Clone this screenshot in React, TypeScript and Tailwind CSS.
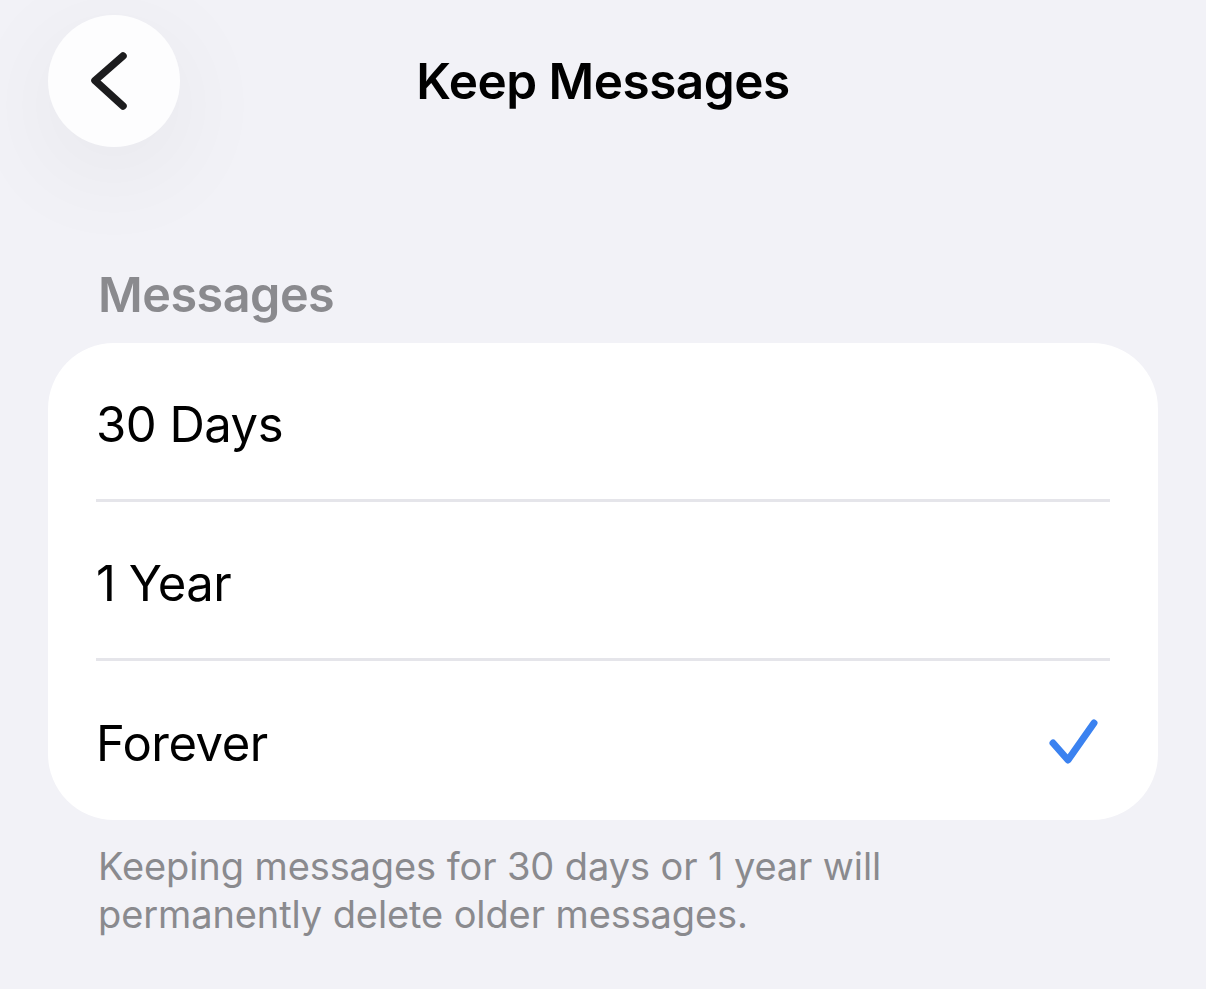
const options = ["30 Days", "1 Year", "Forever"];

function BackChevron() {
  return (
    <svg width="40" height="60" viewBox="0 0 40 60" fill="none" className="-ml-2">
      <path d="M33 5 L5 29.5 L33 55" stroke="#1c1c1e" strokeWidth="7.5" strokeLinecap="round" strokeLinejoin="round" />
    </svg>
  );
}

function Checkmark() {
  return (
    <svg width="56" height="52" viewBox="0 0 56 52" fill="none">
      <path d="M7 28 L22 45 L48 8" stroke="#3b82f0" strokeWidth="7" strokeLinecap="round" strokeLinejoin="round" />
    </svg>
  );
}

export default function App() {
  const selected = "Forever";

  return (
    <div
      className="min-h-[989px] w-full bg-[#f2f2f7] text-black"
      style={{ fontFamily: "Inter, 'Noto Sans', sans-serif" }}
    >
      {/* nav bar */}
      <header className="grid grid-cols-[132px_1fr_132px] items-center px-12 pt-[15px]">
        <button className="flex h-[132px] w-[132px] items-center justify-center rounded-full bg-[#fdfdfe] shadow-[0_24px_110px_rgba(0,0,0,0.06)]">
          <BackChevron />
        </button>
        <h1 className="text-center text-[49.5px] font-semibold tracking-[-0.5px]">Keep Messages</h1>
        <div />
      </header>

      <section className="px-12 pt-[118px]">
        <h2 className="px-[50px] text-[48.5px] font-semibold leading-[60px] tracking-[-0.5px] text-[#8a8a8e]">
          Messages
        </h2>
        <div className="mt-[18px] overflow-hidden rounded-[66px] bg-white">
          {options.map((opt, i) => (
            <div key={opt} className="pl-[48px]">
              <div
                className={
                  "flex h-[159px] items-center justify-between " +
                  (i < options.length - 1 ? "mr-12 border-b-[3px] border-[#e5e5ea]" : "pr-[56px]")
                }
              >
                <span className="pt-[7px] text-[49px] tracking-[-0.5px]">{opt}</span>
                {opt === selected && <Checkmark />}
              </div>
            </div>
          ))}
        </div>
        <p className="mt-[22px] px-[50px] text-[38px] leading-[48px] tracking-[-0.1px] text-[#8a8a8e]">
          Keeping messages for 30 days or 1 year will
          <br />
          permanently delete older messages.
        </p>
      </section>
    </div>
  );
}
